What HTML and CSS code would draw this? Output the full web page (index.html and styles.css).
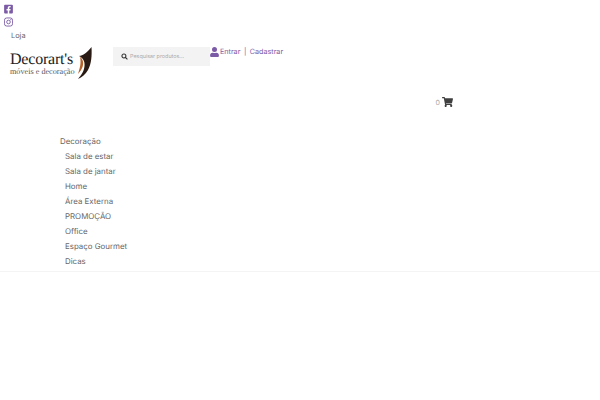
FILE: index.html
```html
<!DOCTYPE html>
<html lang="pt-BR">
<head>
<meta charset="utf-8">
<title>Decorart's</title>
<link rel="stylesheet" href="styles.css">
</head>
<body>
<header class="site-header">
  <div class="social">
    <a class="social-link" href="#" aria-label="Facebook">
      <svg viewBox="0 0 448 512" width="9" height="10"><path fill="#7b5aa6" d="M400 32H48A48 48 0 0 0 0 80v352a48 48 0 0 0 48 48h137V328h-63v-72h63v-55c0-62 37-97 94-97 27 0 56 5 56 5v61h-31c-31 0-41 19-41 39v47h69l-11 72h-58v152h137a48 48 0 0 0 48-48V80a48 48 0 0 0-48-48z"/></svg>
    </a>
    <a class="social-link" href="#" aria-label="Instagram">
      <svg viewBox="0 0 10 10" width="9" height="10"><rect x=".5" y=".5" width="9" height="9" rx="2.5" fill="none" stroke="#7b5aa6"/><circle cx="5" cy="5" r="2" fill="none" stroke="#7b5aa6"/><circle cx="7.6" cy="2.4" r=".6" fill="#7b5aa6"/></svg>
    </a>
  </div>
  <nav class="top-nav"><a href="#">Loja</a></nav>
  <div class="brand-row">
    <a class="logo" href="#">
      <span class="logo-text">
        <span class="logo-name">Decorart's</span>
        <span class="logo-tag">móveis e decoração</span>
      </span>
      <svg class="logo-mark" viewBox="0 0 16 32" width="16" height="32">
        <path fill="#2a1a14" d="M15.5 0C16 8 15.5 17 12 23 9.500 27.500 6 30 2 32 5 28 8 25 8.500 19 9 14 7 11 3 9 7 8.500 11 6 15.500 0z"/>
        <path fill="#b5622a" d="M4 10C7 12 8 16 6.500 20 5.500 23 3.500 25 2 27 3.500 22 5.500 16 4 10z"/>
      </svg>
    </a>
    <form class="search">
      <svg viewBox="0 0 12 12" width="7" height="7"><circle cx="5" cy="5" r="3.4" fill="none" stroke="#333" stroke-width="1.8"/><path d="M7.5 7.500 11 11" stroke="#333" stroke-width="2"/></svg>
      <span class="search-placeholder">Pesquisar produtos...</span>
    </form>
    <div class="account">
      <svg viewBox="0 0 448 512" width="9" height="10"><path fill="#7b5aa6" d="M224 256a128 128 0 1 0 0-256 128 128 0 0 0 0 256zm90 32h-17a174 174 0 0 1-146 0h-17A134 134 0 0 0 0 422v42a48 48 0 0 0 48 48h352a48 48 0 0 0 48-48v-42a134 134 0 0 0-134-134z"/></svg>
      <a href="#">Entrar</a><span class="sep">|</span><a href="#">Cadastrar</a>
    </div>
  </div>
  <div class="cart-row">
    <span class="cart-count">0</span>
    <svg viewBox="0 0 576 512" width="11" height="10"><path fill="#3f3f3f" d="M528 301l47-208a24 24 0 0 0-23-29H159l-9-45A24 24 0 0 0 126 0H24A24 24 0 0 0 0 24v16a24 24 0 0 0 24 24h70l70 343a56 56 0 1 0 67 9h210a56 56 0 1 0 64-10l6-24a24 24 0 0 0-24-29H218l-7-32h293a24 24 0 0 0 24-19z"/></svg>
  </div>
  <nav class="menu">
    <a class="menu-title" href="#">Decoração</a>
    <ul class="menu-list">
      <li><a href="#">Sala de estar</a></li>
      <li><a href="#">Sala de jantar</a></li>
      <li><a href="#">Home</a></li>
      <li><a href="#">Área Externa</a></li>
      <li><a href="#">PROMOÇÃO</a></li>
      <li><a href="#">Office</a></li>
      <li><a href="#">Espaço Gourmet</a></li>
      <li><a href="#">Dicas</a></li>
    </ul>
  </nav>
</header>
</body>
</html>
```
FILE: styles.css
```css
* { box-sizing: border-box; }
html, body { margin: 0; background: #fff; }
body { font-family: Inter, "Open Sans", sans-serif; font-size: 7.9px; color: #666; text-rendering: geometricPrecision; }
a { color: inherit; text-decoration: none; }

.site-header { height: 272px; border-bottom: 1px solid #f4f4f4; }

.social { display: flex; flex-direction: column; padding: 4px 0 0 4px; gap: 3px; }
.social-link { display: block; height: 10px; line-height: 0; }

.top-nav { padding: 3px 0 0 11px; line-height: 12px; height: 16px; font-size: 7.4px; }

.brand-row { display: flex; align-items: flex-start; height: 54px; padding-top: 3px; }
.logo { display: flex; align-items: flex-end; width: 113px; padding-left: 10px; height: 33px; }
.logo-text { display: flex; flex-direction: column; width: 66px; padding-bottom: 3px; }
.logo-name { font-family: "Liberation Serif", serif; font-size: 16px; line-height: 15px; color: #222; letter-spacing: -.2px; }
.logo-tag { font-family: "Liberation Serif", serif; font-size: 8.2px; line-height: 8px; margin-top: 1px; color: #555; }
.logo-mark { flex: none; }

.search { display: flex; align-items: center; width: 97px; height: 19px; margin-top: 1px; padding-left: 8px; gap: 2px; background: #f3f3f3; }
.search-placeholder { font-size: 5.4px; color: #aaa; white-space: nowrap; }

.account { display: flex; align-items: center; color: #7b5aa6; height: 11px; line-height: 11px; font-size: 7.2px; }
.account svg { margin-right: 1px; }
.sep { margin: 0 3.500px; }

.cart-row { display: flex; align-items: center; justify-content: flex-end; gap: 2px; width: 453px; height: 10px; }
.cart-count { color: #aaa; font-size: 7px; }

.menu { padding: 27px 0 0 60px; }
.menu-title { display: block; height: 15px; line-height: 15px; }
.menu-list { list-style: none; margin: 0; padding: 0 0 0 5px; }
.menu-list li { height: 15px; line-height: 15px; }
```
